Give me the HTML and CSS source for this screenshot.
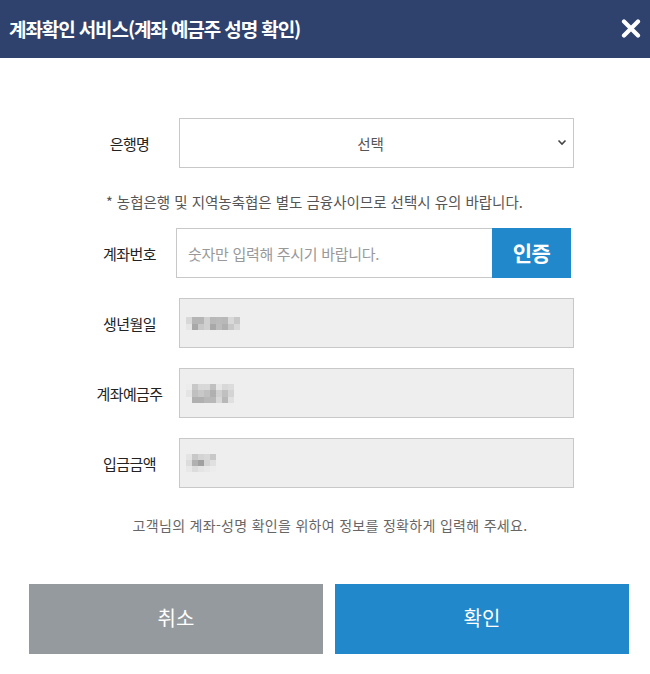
FILE: index.html
```html
<!DOCTYPE html>
<html lang="ko">
<head>
<meta charset="utf-8">
<title>계좌확인 서비스</title>
<link rel="stylesheet" href="styles.css">
</head>
<body>
<div class="modal">
  <header class="head">
    <h1 class="title">계좌확인 서비스(계좌 예금주 성명 확인)</h1>
    <button class="close" type="button" aria-label="닫기">
      <svg width="20" height="19" viewBox="0 0 20 19"><path d="M3 2.5 L17 16.5 M17 2.5 L3 16.5" stroke="#fff" stroke-width="4.2" stroke-linecap="round"/></svg>
    </button>
  </header>
  <div class="content">
    <form class="form">
      <div class="row">
        <label class="lbl">은행명</label>
        <div class="field select">
          <span class="select-text">선택</span>
          <svg class="chev" width="10" height="7" viewBox="0 0 10 7"><path d="M1.5 1.5 L5 5 L8.5 1.5" fill="none" stroke="#444" stroke-width="1.6"/></svg>
        </div>
      </div>
      <p class="notice">* 농협은행 및 지역농축협은 별도 금융사이므로 선택시 유의 바랍니다.</p>
      <div class="row">
        <label class="lbl">계좌번호</label>
        <div class="acct">
          <input class="acct-input" type="text" placeholder="숫자만 입력해 주시기 바랍니다.">
          <button class="auth" type="button">인증</button>
        </div>
      </div>
      <div class="row">
        <label class="lbl">생년월일</label>
        <div class="field readonly">
          <svg class="mosaic" width="54" height="13" viewBox="0 0 54 13">
            <rect x="0" y="0" width="6" height="7" fill="#d8d8d8"/><rect x="6" y="0" width="6" height="7" fill="#b5b5b5"/><rect x="12" y="0" width="6" height="7" fill="#b5b5b5"/><rect x="18" y="0" width="6" height="7" fill="#d0d0d0"/><rect x="24" y="0" width="6" height="7" fill="#b8b8b8"/><rect x="30" y="0" width="6" height="7" fill="#bababa"/><rect x="36" y="0" width="6" height="7" fill="#b8b8b8"/><rect x="42" y="0" width="6" height="7" fill="#d8d8d8"/><rect x="48" y="0" width="6" height="7" fill="#c8c8c8"/>
            <rect x="0" y="7" width="6" height="6" fill="#e6e6e6"/><rect x="6" y="7" width="6" height="6" fill="#a8a8a8"/><rect x="12" y="7" width="6" height="6" fill="#c8c8c8"/><rect x="18" y="7" width="6" height="6" fill="#d0d0d0"/><rect x="24" y="7" width="6" height="6" fill="#a8a8a8"/><rect x="30" y="7" width="6" height="6" fill="#bcbcbc"/><rect x="36" y="7" width="6" height="6" fill="#b0b0b0"/><rect x="42" y="7" width="6" height="6" fill="#c8c8c8"/><rect x="48" y="7" width="6" height="6" fill="#d8d8d8"/>
          </svg>
        </div>
      </div>
      <div class="row">
        <label class="lbl">계좌예금주</label>
        <div class="field readonly">
          <svg class="mosaic" width="48" height="19" viewBox="0 0 48 19">
            <rect x="0" y="0" width="6" height="6" fill="#ececec"/><rect x="6" y="0" width="6" height="6" fill="#c8c8c8"/><rect x="12" y="0" width="6" height="6" fill="#d8d8d8"/><rect x="18" y="0" width="6" height="6" fill="#d8d8d8"/><rect x="24" y="0" width="6" height="6" fill="#c0c0c0"/><rect x="30" y="0" width="6" height="6" fill="#e6e6e6"/><rect x="36" y="0" width="6" height="6" fill="#d8d8d8"/><rect x="42" y="0" width="6" height="6" fill="#dcdcdc"/>
            <rect x="0" y="6" width="6" height="7" fill="#e4e4e4"/><rect x="6" y="6" width="6" height="7" fill="#c0c0c0"/><rect x="12" y="6" width="6" height="7" fill="#c8c8c8"/><rect x="18" y="6" width="6" height="7" fill="#c0c0c0"/><rect x="24" y="6" width="6" height="7" fill="#b0b0b0"/><rect x="30" y="6" width="6" height="7" fill="#d0d0d0"/><rect x="36" y="6" width="6" height="7" fill="#c0c0c0"/><rect x="42" y="6" width="6" height="7" fill="#d4d4d4"/>
            <rect x="0" y="13" width="6" height="6" fill="#eeeeee"/><rect x="6" y="13" width="6" height="6" fill="#b0b0b0"/><rect x="12" y="13" width="6" height="6" fill="#b0b0b0"/><rect x="18" y="13" width="6" height="6" fill="#b8b8b8"/><rect x="24" y="13" width="6" height="6" fill="#b8b8b8"/><rect x="30" y="13" width="6" height="6" fill="#d8d8d8"/><rect x="36" y="13" width="6" height="6" fill="#b8b8b8"/><rect x="42" y="13" width="6" height="6" fill="#e0e0e0"/>
          </svg>
        </div>
      </div>
      <div class="row">
        <label class="lbl">입금금액</label>
        <div class="field readonly">
          <svg class="mosaic" width="30" height="18" viewBox="0 0 30 18">
            <rect x="0" y="0" width="6" height="6" fill="#e4e4e4"/><rect x="6" y="0" width="6" height="6" fill="#c8c8c8"/><rect x="12" y="0" width="6" height="6" fill="#d4d4d4"/><rect x="18" y="0" width="6" height="6" fill="#d8d8d8"/><rect x="24" y="0" width="6" height="6" fill="#c8c8c8"/>
            <rect x="0" y="6" width="6" height="6" fill="#dcdcdc"/><rect x="6" y="6" width="6" height="6" fill="#b0b0b0"/><rect x="12" y="6" width="6" height="6" fill="#a0a0a0"/><rect x="18" y="6" width="6" height="6" fill="#d4d4d4"/><rect x="24" y="6" width="6" height="6" fill="#e0e0e0"/>
            <rect x="0" y="12" width="6" height="6" fill="#e8e8e8"/><rect x="6" y="12" width="6" height="6" fill="#dcdcdc"/><rect x="12" y="12" width="6" height="6" fill="#e4e4e4"/><rect x="18" y="12" width="6" height="6" fill="#e8e8e8"/><rect x="24" y="12" width="6" height="6" fill="#ececec"/>
          </svg>
        </div>
      </div>
    </form>
    <p class="info">고객님의 계좌-성명 확인을 위하여 정보를 정확하게 입력해 주세요.</p>
    <div class="actions">
      <button class="btn btn-cancel" type="button">취소</button>
      <button class="btn btn-ok" type="button">확인</button>
    </div>
  </div>
</div>
</body>
</html>
```
FILE: styles.css
```css
* { box-sizing: border-box; }
html, body { margin: 0; padding: 0; background: #fff; }
body {
  font-family: "Noto Sans CJK KR", "Noto Sans", sans-serif;
  color: #333;
  width: 650px;
}
.modal { width: 650px; }
.head {
  height: 58px;
  background: #2f426e;
  display: flex;
  align-items: center;
  justify-content: space-between;
  padding: 0 8px 0 9px;
}
.title {
  margin: 0;
  color: #fff;
  font-size: 19px;
  font-weight: 700;
  letter-spacing: -1.1px;
  line-height: 1;
  padding-bottom: 2px;
}
.close {
  background: none;
  border: 0;
  padding: 0;
  width: 20px;
  height: 19px;
  display: flex;
  margin-right: 1px;
  margin-bottom: 2px;
}
.content { padding: 60px 0 0; }
.form { padding-left: 80px; }
.row {
  display: flex;
  align-items: center;
  height: 50px;
  margin-bottom: 20px;
}
.row:last-child { margin-bottom: 0; }
.lbl {
  flex: 0 0 99px;
  text-align: center;
  font-size: 15px;
  color: #222;
  letter-spacing: -0.6px;
}
.field {
  width: 395px;
  height: 50px;
  border: 1px solid #c8c8c8;
  display: flex;
  align-items: center;
}
.select {
  position: relative;
  justify-content: center;
  background: #fff;
  padding-right: 12px;
}
.select-text {
  font-size: 14.5px;
  color: #555;
}
.chev {
  position: absolute;
  right: 6px;
  top: 20px;
}
.readonly {
  background: #eeeeee;
  padding-left: 6px;
}
.notice {
  margin: 24px 0 16px;
  padding-left: 26px;
  font-size: 14.5px;
  line-height: 20px;
  color: #555;
  letter-spacing: 0;
}
.acct {
  display: flex;
  height: 50px;
  margin-left: -3px;
}
.acct-input {
  width: 316px;
  height: 50px;
  border: 1px solid #c8c8c8;
  border-right: 0;
  padding: 0 0 0 11px;
  font-family: inherit;
  font-size: 15px;
  letter-spacing: -0.3px;
  color: #333;
  outline: none;
}
.acct-input::placeholder { color: #999; }
.auth {
  width: 79px;
  height: 50px;
  border: 0;
  background: #2288cc;
  color: #fff;
  font-family: inherit;
  font-size: 21px;
  font-weight: 700;
  letter-spacing: -0.5px;
  padding: 0 0 3px;
}
.info {
  margin: 27px 0 0;
  padding-left: 10px;
  text-align: center;
  font-size: 14px;
  line-height: 20px;
  color: #666;
  letter-spacing: 0.3px;
}
.actions {
  display: flex;
  gap: 12px;
  padding: 0 21px 0 29px;
  margin-top: 49px;
}
.btn {
  flex: 0 0 294px;
  height: 70px;
  border: 0;
  color: #fff;
  font-family: inherit;
  font-size: 20px;
  padding: 0 0 4px;
}
.btn-cancel { background: #959a9e; }
.btn-ok { background: #2288cc; }
```
